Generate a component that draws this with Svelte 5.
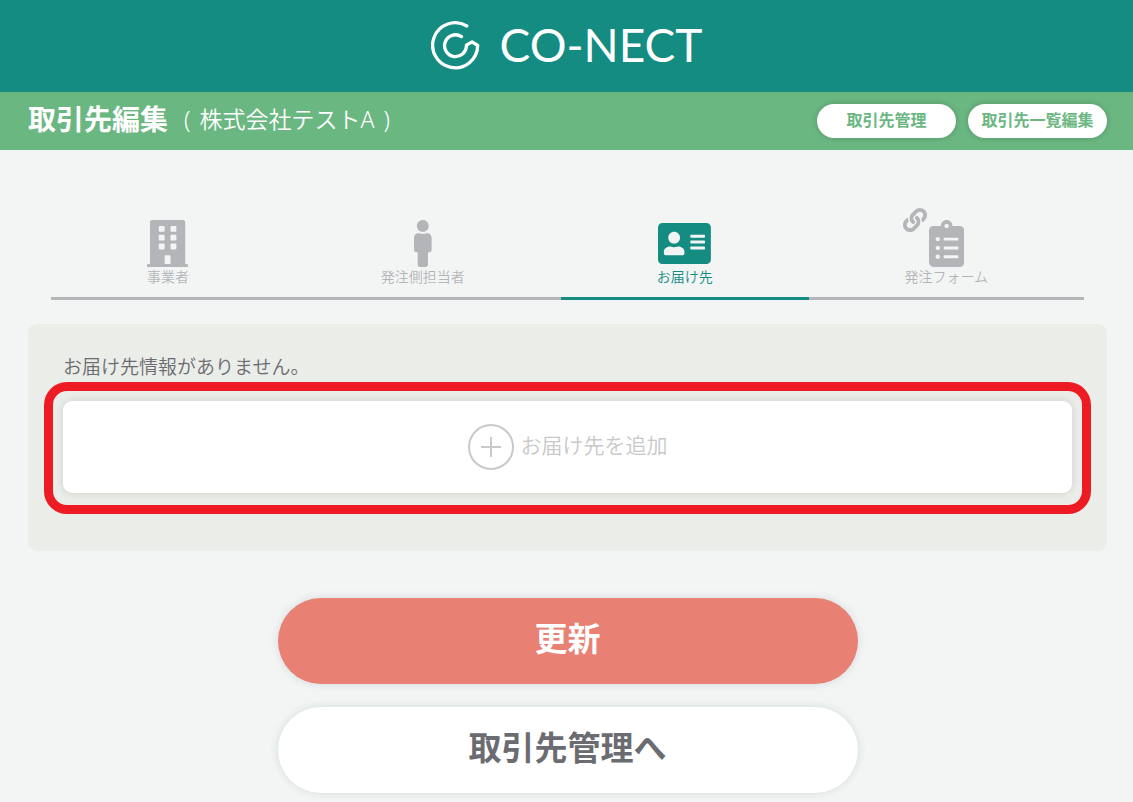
<script lang="ts">
    const company = "株式会社テストA";

    const icons = {
        building: {
            width: 448,
            path: "M436 480h-20V24c0-13.255-10.745-24-24-24H56C42.745 0 32 10.745 32 24v456H12c-6.627 0-12 5.373-12 12v20h448v-20c0-6.627-5.373-12-12-12zM128 76c0-6.627 5.373-12 12-12h40c6.627 0 12 5.373 12 12v40c0 6.627-5.373 12-12 12h-40c-6.627 0-12-5.373-12-12V76zm0 96c0-6.627 5.373-12 12-12h40c6.627 0 12 5.373 12 12v40c0 6.627-5.373 12-12 12h-40c-6.627 0-12-5.373-12-12v-40zm52 148h-40c-6.627 0-12-5.373-12-12v-40c0-6.627 5.373-12 12-12h40c6.627 0 12 5.373 12 12v40c0 6.627-5.373 12-12 12zm76 160h-64v-84c0-6.627 5.373-12 12-12h40c6.627 0 12 5.373 12 12v84zm64-172c0 6.627-5.373 12-12 12h-40c-6.627 0-12-5.373-12-12v-40c0-6.627 5.373-12 12-12h40c6.627 0 12 5.373 12 12v40zm0-96c0 6.627-5.373 12-12 12h-40c-6.627 0-12-5.373-12-12v-40c0-6.627 5.373-12 12-12h40c6.627 0 12 5.373 12 12v40zm0-96c0 6.627-5.373 12-12 12h-40c-6.627 0-12-5.373-12-12V76c0-6.627 5.373-12 12-12h40c6.627 0 12 5.373 12 12v40z",
        },
        person: {
            width: 192,
            path: "M96 0c35.346 0 64 28.654 64 64s-28.654 64-64 64-64-28.654-64-64S60.654 0 96 0m48 144h-11.36c-22.711 10.443-49.59 10.894-73.28 0H48c-26.51 0-48 21.49-48 48v136c0 13.255 10.745 24 24 24h16v136c0 13.255 10.745 24 24 24h64c13.255 0 24-10.745 24-24V352h16c13.255 0 24-10.745 24-24V192c0-26.51-21.49-48-48-48z",
        },
        card: {
            width: 576,
            path: "M528 32H48C21.5 32 0 53.5 0 80v352c0 26.5 21.5 48 48 48h480c26.5 0 48-21.5 48-48V80c0-26.5-21.5-48-48-48zm-352 96c35.3 0 64 28.7 64 64s-28.7 64-64 64-64-28.7-64-64 28.7-64 64-64zm112 236.8c0 10.6-10 19.2-22.4 19.2H86.4C74 384 64 375.4 64 364.8v-19.2c0-31.8 30.1-57.6 67.2-57.6h5c12.3 5.1 25.7 8 39.8 8s27.6-2.9 39.8-8h5c37.1 0 67.2 25.8 67.2 57.6v19.2zM512 312c0 4.4-3.6 8-8 8H360c-4.4 0-8-3.6-8-8v-16c0-4.4 3.6-8 8-8h144c4.4 0 8 3.6 8 8v16zm0-64c0 4.4-3.6 8-8 8H360c-4.4 0-8-3.6-8-8v-16c0-4.4 3.6-8 8-8h144c4.4 0 8 3.6 8 8v16zm0-64c0 4.4-3.6 8-8 8H360c-4.4 0-8-3.6-8-8v-16c0-4.4 3.6-8 8-8h144c4.4 0 8 3.6 8 8v16z",
        },
        clipboard: {
            width: 384,
            path: "M336 64h-80c0-35.3-28.7-64-64-64s-64 28.7-64 64H48C21.5 64 0 85.5 0 112v352c0 26.5 21.5 48 48 48h288c26.5 0 48-21.5 48-48V112c0-26.5-21.5-48-48-48zM96 424c-13.3 0-24-10.7-24-24s10.7-24 24-24 24 10.7 24 24-10.7 24-24 24zm0-96c-13.3 0-24-10.7-24-24s10.7-24 24-24 24 10.7 24 24-10.7 24-24 24zm0-96c-13.3 0-24-10.7-24-24s10.7-24 24-24 24 10.7 24 24-10.7 24-24 24zm96-192c13.3 0 24 10.7 24 24s-10.7 24-24 24-24-10.7-24-24 10.7-24 24-24zm128 368c0 4.4-3.6 8-8 8H168c-4.4 0-8-3.6-8-8v-16c0-4.4 3.6-8 8-8h144c4.4 0 8 3.6 8 8v16zm0-96c0 4.4-3.6 8-8 8H168c-4.4 0-8-3.6-8-8v-16c0-4.4 3.6-8 8-8h144c4.4 0 8 3.6 8 8v16zm0-96c0 4.4-3.6 8-8 8H168c-4.4 0-8-3.6-8-8v-16c0-4.4 3.6-8 8-8h144c4.4 0 8 3.6 8 8v16z",
        },
    };

    const tabs = [
        { label: "事業者", icon: icons.building, linked: false },
        { label: "発注側担当者", icon: icons.person, linked: false },
        { label: "お届け先", icon: icons.card, linked: false },
        { label: "発注フォーム", icon: icons.clipboard, linked: true },
    ];

    let current = $state(2);
</script>

<header class="brand">
    <a class="logo" href="/">
        <svg class="logo-mark" viewBox="54 32 146 148" aria-hidden="true">
            <path
                d="M161 47A68 68 0 1 0 194 106L177 95L160 105A33 33 0 1 1 145 79"
            />
        </svg>
        <span>CO-NECT</span>
    </a>
</header>

<div class="title-bar">
    <h1>取引先編集</h1>
    <div class="company">
        <span>(</span>
        <span>{company}</span>
        <span>)</span>
    </div>
    <nav class="title-links">
        <a href="/customers">取引先管理</a>
        <a href="/customers/edit">取引先一覧編集</a>
    </nav>
</div>

<main>
    <div class="tabs">
        {#each tabs as tab, idx}
            <button
                class="tab"
                class:active={idx === current}
                onclick={() => (current = idx)}
            >
                <span class="tab-icon">
                    {#if tab.linked}
                        <svg class="chain" viewBox="0 0 512 512" aria-hidden="true">
                            <path
                                d="M326.612 185.391c59.747 59.809 58.927 155.698.36 214.59-.11.12-.24.25-.36.37l-67.2 67.2c-59.27 59.27-155.699 59.262-214.96 0-59.27-59.26-59.27-155.7 0-214.96l37.106-37.106c9.84-9.84 26.786-3.3 27.294 10.606.648 17.722 3.826 35.527 9.69 52.721 1.986 5.822.567 12.262-3.783 16.612l-13.087 13.087c-28.026 28.026-28.905 73.66-1.155 101.96 28.024 28.579 74.086 28.749 102.325.51l67.2-67.19c28.191-28.191 28.073-73.757 0-101.83-3.701-3.694-7.429-6.564-10.341-8.569a16.037 16.037 0 0 1-6.947-12.606c-.396-10.567 3.348-21.456 11.698-29.806l21.054-21.055c5.521-5.521 14.182-6.199 20.584-1.731a152.482 152.482 0 0 1 20.522 17.197zM467.547 44.449c-59.261-59.262-155.69-59.27-214.96 0l-67.2 67.2c-.12.12-.25.25-.36.37-58.566 58.892-59.387 154.781.36 214.59a152.454 152.454 0 0 0 20.521 17.196c6.402 4.468 15.064 3.789 20.584-1.731l21.054-21.055c8.35-8.35 12.094-19.239 11.698-29.806a16.037 16.037 0 0 0-6.947-12.606c-2.912-2.005-6.64-4.875-10.341-8.569-28.073-28.073-28.191-73.639 0-101.83l67.2-67.19c28.239-28.239 74.3-28.069 102.325.51 27.75 28.3 26.872 73.934-1.155 101.96l-13.087 13.087c-4.35 4.35-5.769 10.79-3.783 16.612 5.864 17.194 9.042 34.999 9.69 52.721.509 13.906 17.454 20.446 27.294 10.606l37.106-37.106c59.271-59.259 59.271-155.699.001-214.959z"
                            />
                        </svg>
                    {/if}
                    <svg viewBox="0 0 {tab.icon.width} 512" aria-hidden="true">
                        <path d={tab.icon.path} />
                    </svg>
                </span>
                {tab.label}
            </button>
        {/each}
    </div>

    <section class="panel">
        <p>お届け先情報がありません。</p>
        <div class="highlight">
            <button class="add">
                <svg viewBox="0 0 46 46" aria-hidden="true">
                    <circle cx="23" cy="23" r="22" />
                    <path d="M23 13v20M13 23h20" />
                </svg>
                <span>お届け先を追加</span>
            </button>
        </div>
    </section>

    <div class="actions">
        <button class="action primary">更新</button>
        <button class="action">取引先管理へ</button>
    </div>
</main>

<style>
    :global(body) {
        background: #f3f5f4;
        color: #6b6c72;
        font-family: "Noto Sans CJK JP", "Noto Sans", sans-serif;
    }
    button {
        font-family: inherit;
        border: none;
        cursor: pointer;
    }
    a {
        text-decoration: none;
    }
    .brand {
        display: flex;
        align-items: center;
        justify-content: center;
        height: 92px;
        background: #148c82;
    }
    .logo {
        display: flex;
        align-items: center;
        gap: 20px;
        padding-bottom: 2px;
        color: #fff;
        font-family: Lato, sans-serif;
        font-size: 46px;
        line-height: 48px;
    }
    .logo-mark {
        width: 49px;
        height: 49px;
        fill: none;
        stroke: #fff;
        stroke-width: 10;
        stroke-linecap: round;
        stroke-linejoin: round;
    }
    .title-bar {
        display: flex;
        align-items: center;
        min-height: 58px;
        padding: 0 26px 0 28px;
        background: #6bb782;
        color: #fff;
    }
    h1 {
        margin: 0 16px 0 0;
        padding-bottom: 6px;
        font-size: 28px;
        line-height: 40px;
    }
    .company {
        display: flex;
        gap: 9px;
        padding-bottom: 4px;
        font-family: "Noto Sans", "Noto Sans CJK JP", sans-serif;
        font-size: 23px;
        font-weight: 350;
        line-height: 32px;
    }
    .title-links {
        display: flex;
        gap: 12px;
        margin-left: auto;
    }
    .title-links a {
        width: 139px;
        padding-bottom: 4px;
        border-radius: 17px;
        background: #fff;
        box-shadow: 0 0 6px rgba(0, 0, 0, 0.2);
        color: #6bb782;
        font-size: 16px;
        font-weight: bold;
        line-height: 30px;
        text-align: center;
    }
    main {
        padding: 70px 26px 9px 28px;
    }
    .tabs {
        display: flex;
        margin: 0 23px 24px;
    }
    .tab {
        display: flex;
        flex: 1 1 auto;
        flex-direction: column;
        align-items: center;
        padding: 0 0 12px;
        border-bottom: 3px solid #b4b5b9;
        background: none;
        color: #b4b5b9;
        font-size: 14px;
        font-weight: 350;
        line-height: 18px;
    }
    .tab.active {
        border-color: #148c82;
        color: #148c82;
    }
    .tab-icon {
        position: relative;
    }
    .tab-icon svg {
        display: block;
        height: 47px;
        fill: currentColor;
    }
    .tab-icon .chain {
        position: absolute;
        top: -12px;
        right: 37px;
        width: 24px;
        height: 24px;
    }
    .panel {
        padding: 28px 35px 58px;
        border-radius: 9px;
        background: #ebede8;
    }
    .panel p {
        margin: 0 0 21px;
        font-size: 19px;
        font-weight: 350;
        line-height: 28px;
    }
    .highlight {
        position: relative;
    }
    .highlight::after {
        content: "";
        position: absolute;
        inset: -19px -19px -21px;
        border: 9px solid #ed1c24;
        border-radius: 23px;
        pointer-events: none;
    }
    .add {
        display: flex;
        align-items: center;
        justify-content: center;
        gap: 7px;
        width: 100%;
        height: 92px;
        border-radius: 9px;
        background: #fff;
        box-shadow: 0 0 8px rgba(0, 0, 0, 0.12);
        color: #c9c9c9;
        font-size: 21px;
        font-weight: 350;
    }
    .add svg {
        width: 46px;
        height: 46px;
        fill: none;
        stroke: #c9c9c9;
        stroke-width: 2;
    }
    .add span {
        padding-bottom: 6px;
    }
    .actions {
        display: flex;
        flex-direction: column;
        align-items: center;
        gap: 23px;
        margin-top: 47px;
    }
    .action {
        width: 100%;
        max-width: 580px;
        padding: 15px 0 23px;
        border-radius: 43px;
        background: #fff;
        box-shadow: 0 0 8px rgba(60, 80, 110, 0.16);
        color: #6b6c72;
        font-size: 33px;
        font-weight: bold;
        line-height: 48px;
    }
    .action.primary {
        background: #e88073;
        color: #fff;
    }
</style>
